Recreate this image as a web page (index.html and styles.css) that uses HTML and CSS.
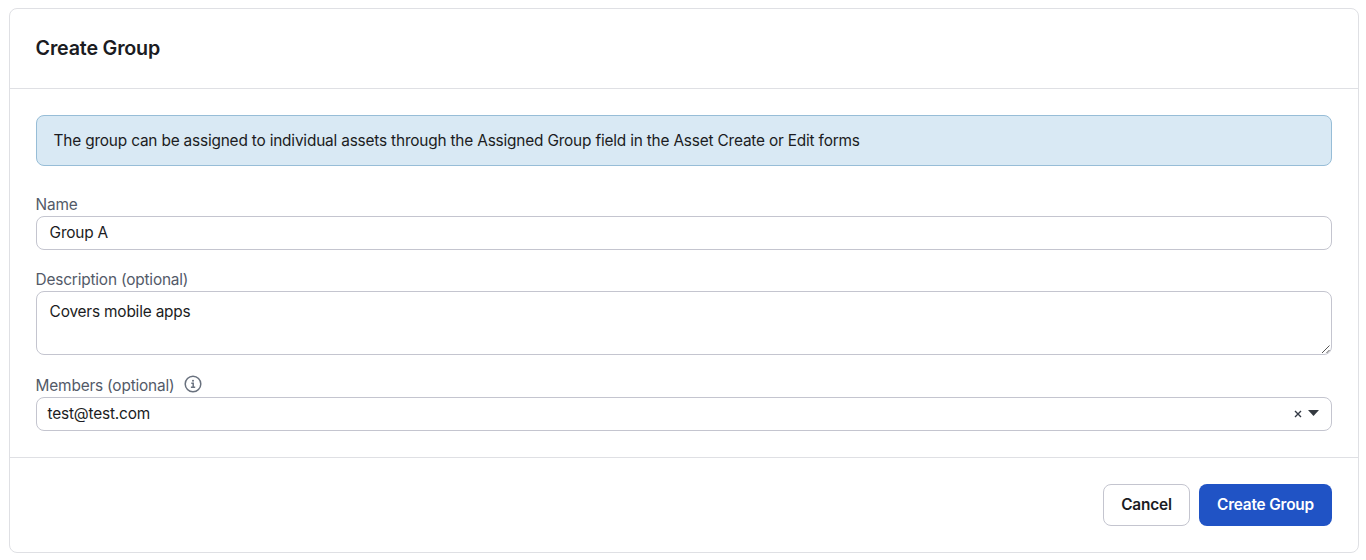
FILE: index.html
```html
<!DOCTYPE html>
<html lang="en">
<head>
<meta charset="utf-8">
<title>Create Group</title>
<link rel="stylesheet" href="styles.css">
</head>
<body>
<form class="card">
  <header class="card-header"><h1 class="title">Create Group</h1></header>
  <div class="card-body">
    <div class="notice">The group can be assigned to individual assets through the Assigned Group field in the Asset Create or Edit forms</div>
    <div class="field field-name">
      <div class="label">Name</div>
      <div class="control">Group A</div>
    </div>
    <div class="field field-description">
      <div class="label">Description (optional)</div>
      <div class="control area">Covers mobile apps
        <svg class="grip" viewBox="0 0 10 10"><path d="M1 9 8.500 1.500M5.500 9 8.500 6"/></svg>
      </div>
    </div>
    <div class="field field-members">
      <div class="label">Members (optional)
        <svg class="info" viewBox="0 0 18 18"><circle cx="9" cy="9" r="7.800"/><path d="M7.300 8.200h1.900v4M6.900 12.300h4.300"/><circle class="dot" cx="9" cy="5.700" r="1"/></svg>
      </div>
      <div class="control select"><span>test@test.com</span>
        <span class="tools"><svg class="clear" viewBox="0 0 8 8"><path d="m1 1 6 6M7 1 1 7"/></svg><svg class="caret" viewBox="0 0 11 6"><path d="M0 0h11L5.500 6z"/></svg></span>
      </div>
    </div>
  </div>
  <footer class="card-footer">
    <button type="button" class="btn btn-cancel">Cancel</button>
    <button type="button" class="btn btn-create">Create Group</button>
  </footer>
</form>
</body>
</html>
```
FILE: styles.css
```css
* { box-sizing: border-box; }
body { margin: 0; background: #fff; color: #1b1c22; font: 15.400px/20px Inter, "Liberation Sans", sans-serif; letter-spacing: -0.185px; }
.card { margin: 8px 7px 0 9px; height: 545px; border: 1px solid #dfe0e4; border-radius: 8px; }
.card-header { height: 80px; padding: 0 25.600px 1px; display: flex; align-items: center; border-bottom: 1px solid #dfe0e4; }
.title { margin: 0; font-size: 19.700px; line-height: 24px; font-weight: 600; letter-spacing: -0.2px; }
.card-body { height: 369px; padding: 26px 25.600px 0; border-bottom: 1px solid #dfe0e4; }
.notice { height: 51px; padding: 0 17px; display: flex; align-items: center; border: 1px solid #97bdd7; border-radius: 8px; background: #d9e9f4; }
.field-name { margin-top: 28px; }
.field-description { margin-top: 20px; }
.field-members { margin-top: 20px; }
.label { height: 21.500px; display: flex; align-items: center; gap: 10px; color: #535a68; }
.control { height: 34px; padding: 0 13px; display: flex; align-items: center; border: 1px solid #c4c5cf; border-radius: 8px; }
.area { position: relative; height: 64px; align-items: flex-start; padding-top: 10px; }
.grip { position: absolute; right: 0; bottom: 0; width: 10px; height: 10px; fill: none; stroke: #555; stroke-width: 1; }
.info { width: 18px; height: 18px; margin-bottom: 4px; fill: none; stroke: #69717e; stroke-width: 1.500; }
.info .dot { fill: #69717e; stroke: none; }
.select { justify-content: space-between; padding: 0 12px 0 11px; }
.tools { display: flex; align-items: center; gap: 6px; padding-top: 1px; }
.clear { width: 8px; height: 8px; stroke: #343a45; stroke-width: 1.400; }
.caret { width: 11px; height: 6px; margin-bottom: 2px; fill: #343a40; }
.card-footer { height: 94px; padding: 0 26px; display: flex; justify-content: flex-end; align-items: center; gap: 9px; }
.btn { height: 42px; padding: 0; border-radius: 8px; font: 600 15.400px/20px Inter, "Liberation Sans", sans-serif; letter-spacing: -0.18px; }
.btn-cancel { width: 87px; border: 1px solid #c4c5cf; background: #fff; color: #1b1c22; }
.btn-create { width: 133px; border: 0; background: #2053c5; color: #fff; }
```
